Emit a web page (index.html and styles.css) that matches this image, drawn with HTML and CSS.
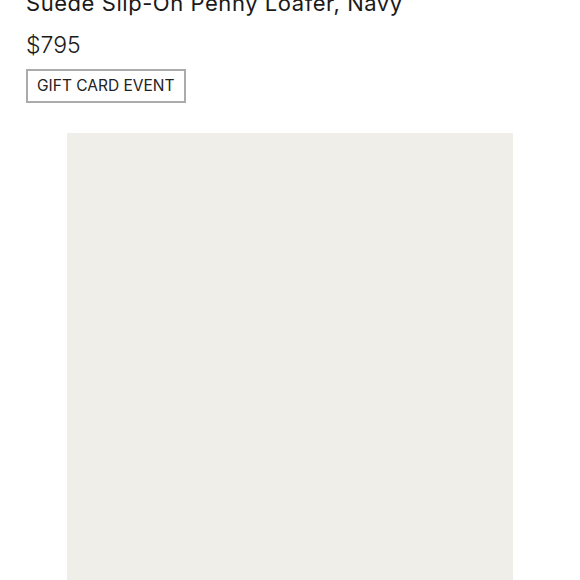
FILE: index.html
```html
<!DOCTYPE html>
<html>
<head>
<meta charset="utf-8">
<link rel="stylesheet" href="styles.css">
</head>
<body>
<div class="product">
  <h1 class="title">Suede Slip-On Penny Loafer, Navy</h1>
  <div class="price">$795</div>
  <div class="badge">GIFT CARD EVENT</div>
  <div class="gallery">
    <div class="photo"></div>
  </div>
</div>
</body>
</html>
```

FILE: styles.css
```css
html, body {
  margin: 0;
  padding: 0;
  background: #ffffff;
  overflow: hidden;
}
.product {
  padding-left: 26px;
  font-family: "Inter", "Liberation Sans", sans-serif;
  color: #1a1a1a;
}
.title {
  margin: -12px 0 0 0;
  font-size: 22px;
  font-weight: 400;
  line-height: 30px;
  letter-spacing: 0.55px;
}
.price {
  margin-top: 12px;
  font-size: 23px;
  font-weight: 300;
  line-height: 30px;
}
.badge {
  display: inline-block;
  margin-top: 9px;
  border: 2px solid #ababab;
  padding: 0 9px;
  height: 30px;
  line-height: 30px;
  font-size: 15.5px;
  color: #222;
}
.gallery {
  margin-top: 30px;
  padding-left: 41px;
}
.photo {
  width: 446px;
  height: 460px;
  background: #efeee9;
}
```
